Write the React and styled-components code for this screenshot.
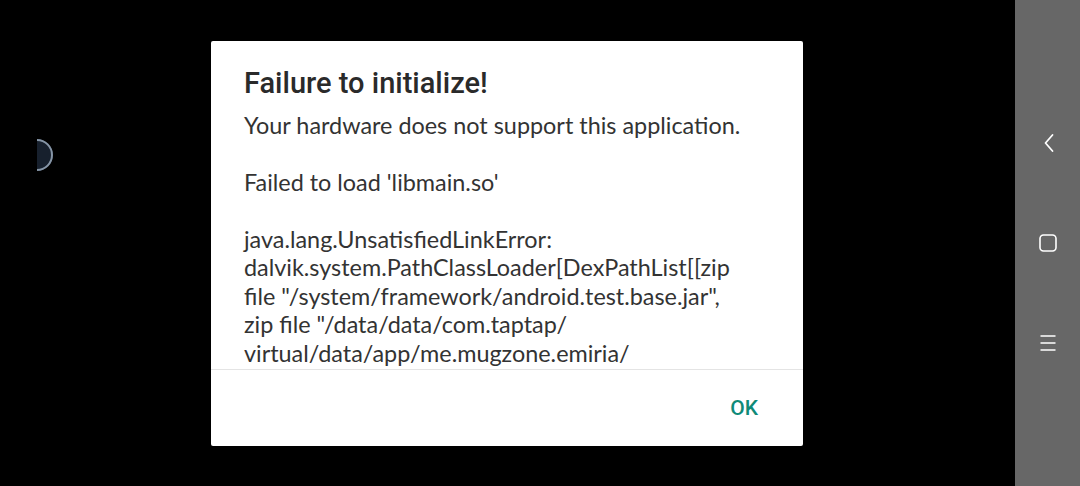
import styled, { createGlobalStyle } from 'styled-components';

const Global = createGlobalStyle`
  html, body {
    margin: 0;
    padding: 0;
    background: #000;
  }
  #root {
    height: 486px;
  }
`;

const Screen = styled.div`
  display: flex;
  width: 1080px;
  height: 486px;
  overflow: hidden;
  font-family: "Lato", "Noto Sans", sans-serif;
`;

const Stage = styled.div`
  position: relative;
  width: 1015px;
  display: flex;
  align-items: center;
  padding-left: 211px;
  box-sizing: border-box;
  background: #000;
`;

const Orb = styled.svg`
  position: absolute;
  left: 21px;
  top: 139px;
`;

const NavBar = styled.div`
  flex: 1;
  display: flex;
  flex-direction: column;
  align-items: center;
  justify-content: center;
  background: #676767;
`;

const NavButton = styled.div`
  height: 100px;
  display: flex;
  align-items: center;
  justify-content: center;
`;

const Dialog = styled.div`
  width: 592px;
  height: 405px;
  background: #fff;
  border-radius: 2px;
  display: flex;
  flex-direction: column;
`;

const Content = styled.div`
  flex: 1;
  overflow: hidden;
  padding: 22px 33px 0;
  border-bottom: 1px solid #e4e4e4;
`;

const Title = styled.h1`
  margin: 0 0 8px;
  font-family: "Roboto", "Lato", sans-serif;
  font-size: 29px;
  font-weight: 500;
  line-height: 40px;
  color: #2a2a2a;
`;

const Message = styled.p`
  margin: 0;
  font-size: 23.4px;
  line-height: 28.5px;
  color: #333;
  white-space: pre;
`;

const Footer = styled.div`
  height: 76px;
  display: flex;
  align-items: center;
  justify-content: flex-end;
  padding-right: 45px;
`;

const TextButton = styled.button`
  border: none;
  background: none;
  padding: 0;
  font-family: "Roboto", "Lato", sans-serif;
  font-size: 21px;
  font-weight: 500;
  color: #0f8a78;
  cursor: pointer;
`;

const message = `Your hardware does not support this application.

Failed to load 'libmain.so'

java.lang.UnsatisfiedLinkError:
dalvik.system.PathClassLoader[DexPathList[[zip
file "/system/framework/android.test.base.jar",
zip file "/data/data/com.taptap/
virtual/data/app/me.mugzone.emiria/`;

export default function App() {
  return (
    <>
      <Global />
      <Screen>
        <Stage>
          <Orb width="34" height="34" viewBox="0 0 34 34">
            <path d="M16 0 A16 16 0 0 1 16 32 Z" fill="#17202d" />
            <path d="M16 1 A15 15 0 0 1 16 31" fill="none" stroke="#8695a6" strokeWidth="2" />
          </Orb>
          <Dialog>
            <Content>
              <Title>Failure to initialize!</Title>
              <Message>{message}</Message>
            </Content>
            <Footer>
              <TextButton>OK</TextButton>
            </Footer>
          </Dialog>
        </Stage>
        <NavBar>
          <NavButton>
            <svg width="20" height="24" viewBox="0 0 20 24">
              <path d="M14.5 4 L7.5 12 L14.5 20" fill="none" stroke="#fff" strokeWidth="1.8" strokeLinecap="round" strokeLinejoin="round" />
            </svg>
          </NavButton>
          <NavButton>
            <svg width="20" height="20" viewBox="0 0 20 20">
              <rect x="2" y="2" width="16" height="16" rx="3.5" fill="none" stroke="#fff" strokeWidth="1.6" />
            </svg>
          </NavButton>
          <NavButton>
            <svg width="20" height="20" viewBox="0 0 20 20">
              <path d="M2.5 3 H17.5 M2.5 10 H17.5 M2.5 17 H17.5" stroke="#fff" strokeWidth="1.6" />
            </svg>
          </NavButton>
        </NavBar>
      </Screen>
    </>
  );
}
